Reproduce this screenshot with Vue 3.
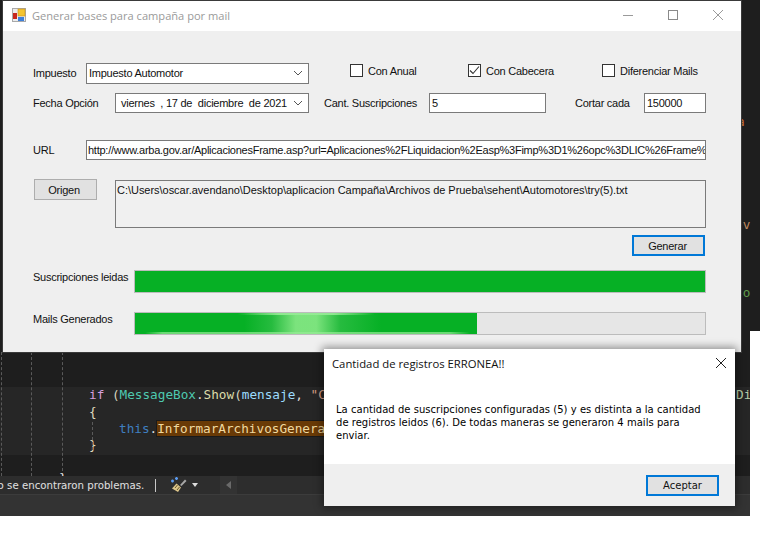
<template>
  <div class="screen">
    <div class="ide">
      <div class="editor">
        <i class="guide g1"></i><i class="guide g2"></i><i class="guide g3"></i><i class="guide g4"></i>
        <div class="code">
          <div class="line"><span class="kw">if</span> <span class="br">(</span><span class="type">MessageBox</span>.<span class="fn">Show</span><span class="br">(</span><span class="var">mensaje</span>, <span class="str">"Cantidad de registros ERRONEA!!"</span></div>
          <div class="line"><span class="br2">{</span></div>
          <div class="line indent"><span class="this">this</span>.<span class="hit">InformarArchivosGenerados</span></div>
          <div class="line"><span class="br2">}</span></div>
        </div>
        <span class="peek di">Di</span>
        <span class="peek end-brace">}</span>
      </div>
      <div class="status">
        <span class="problems">No se encontraron problemas.</span>
        <i class="sep"></i>
        <svg class="broom" width="18" height="16" viewBox="0 0 18 16">
          <path d="M10 8 15 2.500 16.500 4 11.500 9Z" fill="#a8a8a8" />
          <path d="M6.500 6.500 11 10.500 8 15 2 11.500Z" fill="#dcc58a" />
          <path d="M5 11 7.500 8M7 13 9.500 10" stroke="#6b5a2c" stroke-width="1" />
          <path d="M1 4h3M2.500 2.500v3M5 1.500h3M6.500 0v3" stroke="#5b9bf0" stroke-width="1.500" />
        </svg>
        <i class="caret"></i>
        <div class="scroll-btn"><i class="scroll-arrow"></i></div>
      </div>
      <div class="bottom"></div>
    </div>

    <span class="peek side-o">a</span>
    <span class="peek side-nv">nv</span>
    <span class="peek side-lo">lo</span>

    <section class="window main-window">
      <header class="titlebar">
        <svg class="app-icon" width="14" height="14" viewBox="0 0 14 14">
          <rect x="0.500" y="0.500" width="13" height="13" fill="#ececec" stroke="#a9a9a9" />
          <rect x="6" y="1" width="7" height="7" fill="#f4c430" stroke="#c8901c" stroke-width="0.600" />
          <rect x="1" y="5" width="4" height="6" fill="#c8281e" />
          <rect x="6" y="9" width="6" height="4" fill="#3d7fd9" />
        </svg>
        <span class="title">Generar bases para campaña por mail</span>
        <div class="controls">
          <svg width="12" height="12" viewBox="0 0 12 12"><path d="M1 6.500h10" stroke="#9a9a9a" /></svg>
          <svg width="12" height="12" viewBox="0 0 12 12"><rect x="1.500" y="1.500" width="9" height="9" fill="none" stroke="#8a8a8a" /></svg>
          <svg width="12" height="12" viewBox="0 0 12 12"><path d="M1 1 11 11M11 1 1 11" stroke="#9a9a9a" /></svg>
        </div>
      </header>

      <div class="form">
        <div class="row row-tax">
          <label class="lbl w-tax">Impuesto</label>
          <div class="field select tax">
            <span>Impuesto Automotor</span>
            <svg class="chev" width="10" height="6" viewBox="0 0 10 6"><path d="M1 1 5 5 9 1" fill="none" stroke="#555" /></svg>
          </div>
          <div v-for="c in checks" :key="c.label" class="check" :class="c.cls">
            <span class="box">
              <svg v-if="c.on" width="11" height="11" viewBox="0 0 11 11"><path d="M1 5.500 4 8.500 10 1.500" fill="none" stroke="#333" stroke-width="1.100" /></svg>
            </span>
            <span>{{ c.label }}</span>
          </div>
        </div>

        <div class="row row-date">
          <label class="lbl w-date">Fecha Opción</label>
          <div class="field select date">
            <span>viernes&nbsp;&nbsp;, 17 de&nbsp;&nbsp;diciembre&nbsp;&nbsp;de 2021</span>
            <svg class="chev" width="10" height="6" viewBox="0 0 10 6"><path d="M1 1 5 5 9 1" fill="none" stroke="#555" /></svg>
          </div>
          <label class="lbl cant">Cant. Suscripciones</label>
          <div class="field subs">5</div>
          <label class="lbl cut">Cortar cada</label>
          <div class="field cut-val">150000</div>
        </div>

        <div class="row row-url">
          <label class="lbl w-tax">URL</label>
          <div class="field url">http://www.arba.gov.ar/AplicacionesFrame.asp?url=Aplicaciones%2FLiquidacion%2Easp%3Fimp%3D1%26opc%3DLIC%26Frame%3DSI</div>
        </div>

        <div class="row row-origin">
          <button class="btn origin">Origen</button>
          <div class="path">C:\Users\oscar.avendano\Desktop\aplicacion Campaña\Archivos de Prueba\sehent\Automotores\try(5).txt</div>
        </div>

        <div class="row row-generate">
          <button class="btn focus generate">Generar</button>
        </div>

        <div v-for="b in bars" :key="b.label" class="row bar-row">
          <label class="lbl bar-label">{{ b.label }}</label>
          <div class="bar">
            <div class="bar-fill" :class="{ pulse: b.pulse }" :style="{ width: b.pct + '%' }"></div>
          </div>
        </div>
      </div>
    </section>

    <section class="window dialog">
      <header class="dlg-head">
        <span>Cantidad de registros ERRONEA!!</span>
        <svg width="12" height="12" viewBox="0 0 12 12"><path d="M1 1 11 11M11 1 1 11" stroke="#222" /></svg>
      </header>
      <p class="dlg-msg">La cantidad de suscripciones configuradas (5) y es distinta a la cantidad<br />de registros leidos (6). De todas maneras se generaron 4 mails para<br />enviar.</p>
      <footer class="dlg-foot">
        <button class="btn focus accept">Aceptar</button>
      </footer>
    </section>
  </div>
</template>

<script setup>
const checks = [
  { label: 'Con Anual', on: false, cls: 'c1' },
  { label: 'Con Cabecera', on: true, cls: 'c2' },
  { label: 'Diferenciar Mails', on: false, cls: 'c3' }
]

const bars = [
  { label: 'Suscripciones leidas', pct: 100, pulse: false },
  { label: 'Mails Generados', pct: 60, pulse: true }
]
</script>

<style>
html, body {
  margin: 0;
  background: #fff;
  overflow: hidden;
}
</style>

<style scoped>
.screen {
  position: relative;
  width: 760px;
  height: 534px;
  overflow: hidden;
  background: #fff;
  font-family: "Liberation Sans", Arial, sans-serif;
  font-size: 11px;
  letter-spacing: -0.25px;
  color: #111;
}

/* ide behind the windows */
.ide {
  width: 750px;
  height: 516px;
  background: #1e1e1e;
  display: flex;
  flex-direction: column;
  box-shadow: 10px -185px 0 #1e1e1e;
  letter-spacing: 0;
}
.editor {
  position: relative;
  flex: 1;
  overflow: hidden;
}
.guide {
  position: absolute;
  top: 352px;
  bottom: 0;
  border-left: 1px dashed #5a5a5a;
}
.g1 { left: 1px; }
.g2 { left: 31px; }
.g3 { left: 62px; }
.g4 { left: 92px; top: 422px; bottom: 26px; }
.code {
  margin-top: 387px;
  height: 68px;
  padding-left: 89px;
  box-sizing: border-box;
  background: #262626;
  font-family: "DejaVu Sans Mono", monospace;
  font-size: 12.700px;
  line-height: 16.800px;
  color: #dcdcdc;
  white-space: nowrap;
}
.indent { padding-left: 30px; }
.kw { color: #d8a0df; }
.br { color: #d7d7c0; }
.br2 { color: #e0dcc0; }
.type { color: #4ec9b0; }
.fn { color: #dcdcaa; }
.var { color: #9cdcfe; }
.str { color: #d69d85; }
.this { color: #3f7fc0; }
.hit {
  background: #693a06;
  outline: 1px solid #1a1a1a;
  color: #f0d9a0;
}
.peek {
  position: absolute;
  font-family: "DejaVu Sans Mono", monospace;
  font-size: 12.700px;
  letter-spacing: 0;
}
.di { left: 736px; top: 387px; color: #b5cea8; }
.end-brace { left: 59px; top: 470px; color: #dcdcdc; }
.side-o { left: 737px; top: 114px; color: #c8703a; }
.side-nv { left: 735px; top: 217px; color: #c08a62; }
.side-lo { left: 735px; top: 285px; color: #5f9a4a; }

.status {
  position: relative;
  height: 18px;
  display: flex;
  align-items: center;
  background: #2d2d2d;
  border-bottom: 1px solid #3c3c3c;
  color: #e0e0e0;
  font-family: "DejaVu Sans", sans-serif;
  font-size: 10.200px;
  overflow: hidden;
}
.problems {
  margin-left: -10px;
  width: 165px;
  flex: none;
  white-space: nowrap;
}
.sep {
  width: 1px;
  height: 13px;
  background: #c8c8c8;
}
.broom { margin-left: 14px; }
.caret {
  margin-left: 4px;
  border: 3.500px solid transparent;
  border-top: 4px solid #ddd;
  border-bottom: 0;
}
.scroll-btn {
  margin-left: 22px;
  width: 17px;
  height: 18px;
  background: #333;
  display: flex;
  align-items: center;
  justify-content: center;
}
.scroll-arrow {
  border: 4px solid transparent;
  border-right: 5px solid #6a6a6a;
  border-left: 0;
}
.bottom {
  height: 21px;
  background: #333;
}

/* windows */
.window {
  position: absolute;
  box-sizing: border-box;
}
.main-window {
  left: 3px;
  top: 1px;
  width: 738px;
  height: 351px;
  background: #efefef;
  box-shadow: 0 0 0 1px #3a3a3a;
}
.titlebar {
  height: 30px;
  background: #fff;
  display: flex;
  align-items: center;
  padding-left: 9px;
  font-family: "Open Sans", sans-serif;
  font-size: 11.100px;
  letter-spacing: 0;
  color: #9a9a9a;
}
.app-icon { margin-right: 6px; margin-top: -2px; }
.title { margin-top: -2px; }
.controls {
  margin-left: auto;
  display: flex;
  gap: 33px;
  padding-right: 17px;
  margin-top: -2px;
}

.form {
  padding: 32px 0 0 30px;
}
.row {
  display: flex;
  align-items: center;
}
.lbl { white-space: nowrap; }
.w-tax { width: 53px; flex: none; }
.w-date { width: 82px; flex: none; }
.field {
  box-sizing: border-box;
  height: 20px;
  border: 1px solid #7a7a7a;
  background: #fff;
  padding: 0 2px;
  display: flex;
  align-items: center;
  white-space: nowrap;
  overflow: hidden;
  flex: none;
}
.select { justify-content: space-between; }
.chev { margin-right: 3px; flex: none; }
.tax { width: 223px; height: 21px; padding-bottom: 2px; }
.row-tax { height: 21px; }
.row-tax .lbl { padding-bottom: 2px; }
.row-date { margin-top: 9px; height: 20px; }
.date { width: 194px; padding-left: 5px; }
.cant { margin-left: 15px; width: 105px; }
.subs { width: 117px; }
.cut { margin-left: 29px; width: 69px; }
.cut-val { width: 62px; }
.url { width: 620px; padding-left: 1px; }
.row-url { margin-top: 27px; height: 20px; }

.check {
  display: flex;
  align-items: center;
  gap: 5px;
  flex: none;
  margin-top: -6px;
}
.box {
  box-sizing: border-box;
  width: 13px;
  height: 13px;
  border: 1px solid #333;
  background: #fff;
  display: flex;
  align-items: center;
  justify-content: center;
}
.c1 { margin-left: 41px; width: 118px; }
.c2 { width: 134px; }
.c3 { width: 110px; }

.row-origin {
  margin-top: 20px;
  align-items: flex-start;
}
.btn {
  font: inherit;
  letter-spacing: inherit;
  color: #111;
  background: #e1e1e1;
  border: 1px solid #adadad;
  box-sizing: border-box;
  padding: 0;
}
.origin {
  width: 63px;
  height: 21px;
  margin-left: 1px;
  margin-top: -1px;
  padding-right: 3px;
}
.path {
  box-sizing: border-box;
  margin-left: 18px;
  width: 591px;
  height: 48px;
  border: 1px solid #7a7a7a;
  padding: 3px 1px;
  white-space: nowrap;
  background: #f0f0f0;
  letter-spacing: -0.030px;
}
.row-generate {
  margin-top: 7px;
  padding-left: 599px;
}
.focus {
  border: 2px solid #0078d7;
}
.generate {
  width: 73px;
  height: 21px;
  padding-right: 2px;
}
.bar-row {
  align-items: flex-start;
  margin-top: 19px;
}
.row-generate + .bar-row { margin-top: 14px; }
.bar-label {
  width: 101px;
  flex: none;
  padding-top: 1px;
}
.bar {
  box-sizing: border-box;
  width: 572px;
  height: 23px;
  background: #e6e6e6;
  border: 1px solid #bcbcbc;
}
.bar-fill {
  height: 100%;
  background: #06b025;
}
.pulse {
  background:
    linear-gradient(90deg, transparent 3%, rgba(150, 235, 150, 0.7) 8%, rgba(150, 235, 150, 0.7) 92%, transparent 98%) bottom / 100% 2px no-repeat,
    linear-gradient(90deg, transparent 30%, rgba(150, 235, 150, 0.9) 42%, rgba(150, 235, 150, 0.9) 58%, transparent 70%) top / 100% 2px no-repeat,
    linear-gradient(90deg, transparent 32%, rgba(60, 195, 80, 0.6) 40%, rgba(130, 230, 130, 0.95) 47%, rgba(130, 230, 130, 0.95) 53%, rgba(60, 195, 80, 0.6) 60%, transparent 72%),
    #06b025;
}

/* message box */
.dialog {
  left: 324px;
  top: 349px;
  width: 411px;
  height: 157px;
  background: #fff;
  box-shadow: 0 0 8px 2px rgba(0, 0, 0, 0.4);
  display: flex;
  flex-direction: column;
  letter-spacing: 0;
}
.dlg-head {
  height: 28px;
  padding: 0 8px 0 8px;
  display: flex;
  align-items: center;
  justify-content: space-between;
  font-family: "Open Sans", sans-serif;
  font-size: 11.300px;
  color: #111;
}
.dlg-msg {
  margin: 26px 0 0 12px;
  font-family: "DejaVu Sans", sans-serif;
  font-size: 10px;
  letter-spacing: 0.030px;
  line-height: 13px;
  color: #000;
  flex: 1;
  white-space: nowrap;
}
.dlg-foot {
  height: 42px;
  background: #efefef;
  display: flex;
  justify-content: flex-end;
  align-items: center;
  padding-right: 16px;
}
.accept {
  width: 73px;
  height: 21px;
  font-family: "DejaVu Sans", sans-serif;
  font-size: 10px;
}
</style>
